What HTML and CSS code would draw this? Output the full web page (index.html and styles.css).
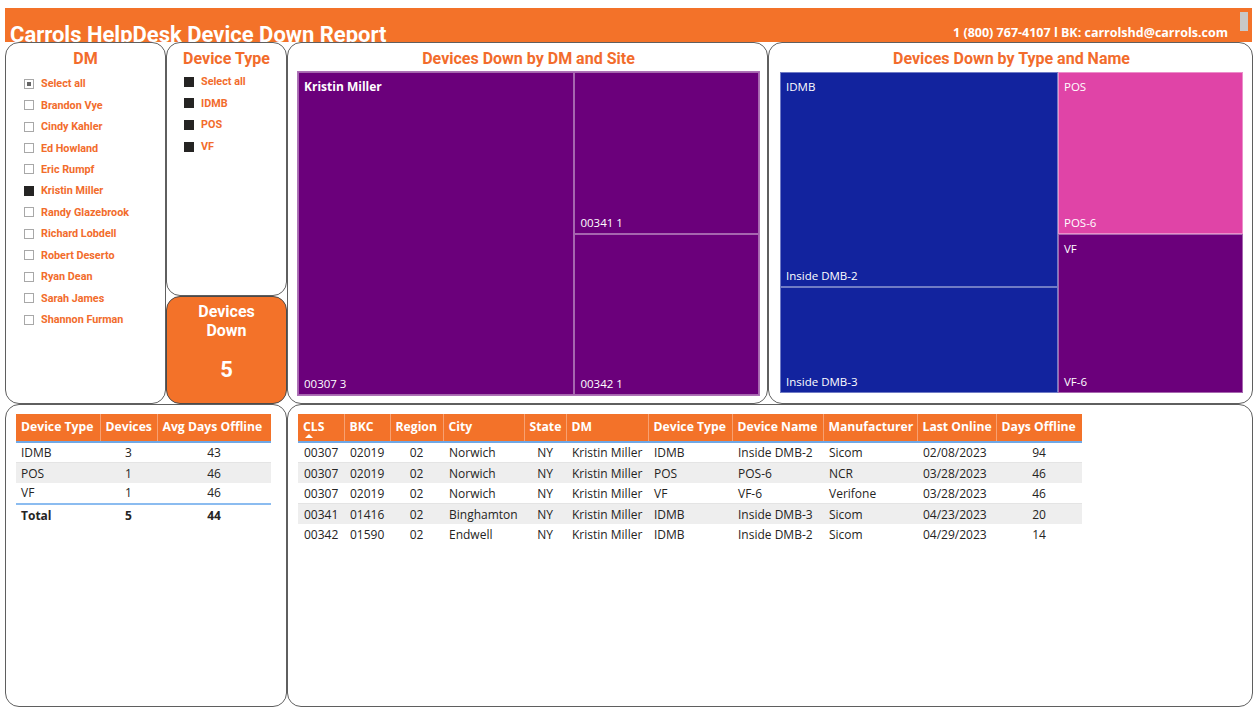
FILE: index.html
```html
<!DOCTYPE html>
<html>
<head>
<meta charset="utf-8">
<link rel="stylesheet" href="styles.css">
</head>
<body>
<div class="topbar">
  <div class="title">Carrols HelpDesk Device Down Report</div>
  <div class="contact">1 (800) 767-4107 l BK: carrolshd@carrols.com</div>
  <span class="thumb"></span>
</div>
<div class="board">
  <div class="panel dm">
    <div class="ptitle">DM</div>
    <ul class="slicer">
      <li><span class="cb partial"></span>Select all</li>
      <li><span class="cb"></span>Brandon Vye</li>
      <li><span class="cb"></span>Cindy Kahler</li>
      <li><span class="cb"></span>Ed Howland</li>
      <li><span class="cb"></span>Eric Rumpf</li>
      <li><span class="cb on"></span>Kristin Miller</li>
      <li><span class="cb"></span>Randy Glazebrook</li>
      <li><span class="cb"></span>Richard Lobdell</li>
      <li><span class="cb"></span>Robert Deserto</li>
      <li><span class="cb"></span>Ryan Dean</li>
      <li><span class="cb"></span>Sarah James</li>
      <li><span class="cb"></span>Shannon Furman</li>
    </ul>
  </div>
  <div class="midcol">
    <div class="panel dtype">
      <div class="ptitle">Device Type</div>
      <ul class="slicer tight">
        <li><span class="cb on"></span>Select all</li>
        <li><span class="cb on"></span>IDMB</li>
        <li><span class="cb on"></span>POS</li>
        <li><span class="cb on"></span>VF</li>
      </ul>
    </div>
    <div class="card">
      <div class="card-label">Devices<br>Down</div>
      <div class="card-value">5</div>
    </div>
  </div>
  <div class="panel tm1">
    <div class="ptitle">Devices Down by DM and Site</div>
    <div class="treemap purple">
      <div class="cell c307">
        <span class="glabel">Kristin Miller</span>
        <span class="ilabel">00307 3</span>
      </div>
      <div class="tcol w185">
        <div class="cell h162"><span></span><span class="ilabel">00341 1</span></div>
        <div class="cell grow"><span></span><span class="ilabel">00342 1</span></div>
      </div>
    </div>
  </div>
  <div class="panel tm2">
    <div class="ptitle">Devices Down by Type and Name</div>
    <div class="treemap">
      <div class="tcol w278 blue">
        <div class="cell h215"><span class="tlabel">IDMB</span><span class="ilabel">Inside DMB-2</span></div>
        <div class="cell grow"><span></span><span class="ilabel">Inside DMB-3</span></div>
      </div>
      <div class="tcol grow">
        <div class="cell h162 pink"><span class="tlabel">POS</span><span class="ilabel">POS-6</span></div>
        <div class="cell grow purple"><span class="tlabel">VF</span><span class="ilabel">VF-6</span></div>
      </div>
    </div>
  </div>
  <div class="panel bl">
    <table class="grid summary">
      <colgroup><col style="width:84px"><col style="width:57px"><col style="width:114px"></colgroup>
      <thead>
        <tr><th>Device Type</th><th>Devices</th><th>Avg Days Offline</th></tr>
      </thead>
      <tbody>
        <tr><td>IDMB</td><td class="c">3</td><td class="c">43</td></tr>
        <tr class="alt"><td>POS</td><td class="c">1</td><td class="c">46</td></tr>
        <tr><td>VF</td><td class="c">1</td><td class="c">46</td></tr>
      </tbody>
      <tfoot>
        <tr><td>Total</td><td class="c">5</td><td class="c">44</td></tr>
      </tfoot>
    </table>
  </div>
  <div class="panel br">
    <table class="grid detail">
      <colgroup>
        <col style="width:46px"><col style="width:46px"><col style="width:53px"><col style="width:81px">
        <col style="width:42px"><col style="width:82px"><col style="width:84px"><col style="width:91px">
        <col style="width:94px"><col style="width:79px"><col style="width:86px">
      </colgroup>
      <thead>
        <tr>
          <th class="sorted">CLS<span class="sort"></span></th><th>BKC</th><th>Region</th><th>City</th><th>State</th><th>DM</th>
          <th>Device Type</th><th>Device Name</th><th>Manufacturer</th><th>Last Online</th><th>Days Offline</th>
        </tr>
      </thead>
      <tbody>
        <tr><td>00307</td><td>02019</td><td class="c">02</td><td>Norwich</td><td class="c">NY</td><td>Kristin Miller</td><td>IDMB</td><td>Inside DMB-2</td><td>Sicom</td><td>02/08/2023</td><td class="c">94</td></tr>
        <tr class="alt"><td>00307</td><td>02019</td><td class="c">02</td><td>Norwich</td><td class="c">NY</td><td>Kristin Miller</td><td>POS</td><td>POS-6</td><td>NCR</td><td>03/28/2023</td><td class="c">46</td></tr>
        <tr><td>00307</td><td>02019</td><td class="c">02</td><td>Norwich</td><td class="c">NY</td><td>Kristin Miller</td><td>VF</td><td>VF-6</td><td>Verifone</td><td>03/28/2023</td><td class="c">46</td></tr>
        <tr class="alt"><td>00341</td><td>01416</td><td class="c">02</td><td>Binghamton</td><td class="c">NY</td><td>Kristin Miller</td><td>IDMB</td><td>Inside DMB-3</td><td>Sicom</td><td>04/23/2023</td><td class="c">20</td></tr>
        <tr><td>00342</td><td>01590</td><td class="c">02</td><td>Endwell</td><td class="c">NY</td><td>Kristin Miller</td><td>IDMB</td><td>Inside DMB-2</td><td>Sicom</td><td>04/29/2023</td><td class="c">14</td></tr>
      </tbody>
    </table>
  </div>
</div>
</body>
</html>
```

FILE: styles.css
```css
* { box-sizing: border-box; }
html, body { margin: 0; padding: 0; background: #fff; }
body { width: 1257px; height: 711px; overflow: hidden; font-family: "Open Sans", "Liberation Sans", sans-serif; color: #252423; }

.topbar {
  position: relative;
  margin: 8px 5px 0 5px;
  height: 34px;
  background: #F37229;
  display: flex;
  justify-content: space-between;
  overflow: hidden;
  color: #fff;
}
.title {
  font-family: Roboto, "Liberation Sans", sans-serif;
  font-weight: 700;
  font-size: 22px;
  line-height: 22px;
  padding: 16px 0 0 5px;
  white-space: nowrap;
}
.contact {
  font-family: "Open Sans", "Liberation Sans", sans-serif;
  font-weight: 700;
  font-size: 12.5px;
  line-height: 16px;
  padding: 17px 24px 0 0;
  white-space: nowrap;
}
.thumb {
  position: absolute;
  right: 4px;
  top: 4px;
  width: 8px;
  height: 19px;
  background: #c8c8c8;
}

.board {
  margin-left: 5px;
  display: grid;
  grid-template-columns: 161px 121px 481px 485px;
  grid-template-rows: 362px 303px;
}
.panel {
  border: 1px solid #5f5f5f;
  border-radius: 14px;
  background: #fff;
  overflow: hidden;
}
.ptitle {
  font-family: Roboto, "Liberation Sans", sans-serif;
  font-weight: 700;
  font-size: 16px;
  line-height: 20px;
  color: #F26C2C;
  text-align: center;
  padding-top: 6px;
  height: 28px;
}

.dm { grid-column: 1; grid-row: 1; }
.midcol { grid-column: 2; grid-row: 1; display: flex; flex-direction: column; }
.dtype { height: 254px; }
.tm1 { grid-column: 3; grid-row: 1; padding: 0 7px 0 9px; }
.tm2 { grid-column: 4; grid-row: 1; padding: 0 8px 0 10px; }
.bl { grid-column: 1 / span 2; grid-row: 2; padding: 9px 10px 0 10px; }
.br { grid-column: 3 / span 2; grid-row: 2; padding: 9px 10px 0 10px; }

.slicer {
  list-style: none;
  margin: 0;
  padding: 2px 0 0 18px;
}
.slicer li {
  display: flex;
  align-items: center;
  height: 21.45px;
  font-family: Roboto, "Liberation Sans", sans-serif;
  font-weight: 700;
  font-size: 10.8px;
  color: #F26C2C;
}
.dtype .slicer { padding: 0 0 0 17px; }
.dtype .slicer li { height: 21.6px; }
.cb {
  width: 10px;
  height: 10px;
  border: 1px solid #a8a8a8;
  background: #fff;
  margin-right: 7px;
  flex: none;
  position: relative;
}
.cb.partial::after {
  content: "";
  position: absolute;
  left: 2px; top: 2px;
  width: 4px; height: 4px;
  background: #666;
}
.cb.on { background: #252423; border-color: #252423; }

.card {
  height: 108px;
  background: #F37229;
  border: 1px solid #4a4a4a;
  border-radius: 14px;
  color: #fff;
  text-align: center;
  font-family: Roboto, "Liberation Sans", sans-serif;
  font-weight: 700;
}
.card-label { font-size: 16px; line-height: 19px; padding-top: 5px; }
.card-value { font-size: 22px; line-height: 26px; padding-top: 17px; }

.treemap {
  display: flex;
  height: 325px;
  border: 1px solid rgba(255,255,255,0.45);
}
.tm2 .treemap { height: 323px; }
.tcol { display: flex; flex-direction: column; }
.w185 { width: 185px; }
.w278 { width: 278px; }
.grow { flex: 1; }
.cell {
  display: flex;
  flex-direction: column;
  justify-content: space-between;
  padding: 4px 5px 2px 5px;
  color: #fff;
  font-family: "Open Sans", "Liberation Sans", sans-serif;
  font-size: 11.5px;
  line-height: 16px;
  border: 0.5px solid rgba(255,255,255,0.4);
}
.c307 { width: 277px; }
.h162 { height: 162px; }
.h215 { height: 215px; }
.purple { background: #6B007B; }
.blue { background: #12239E; }
.pink { background: #E044A7; }
.glabel { font-weight: 700; font-size: 12px; padding-top: 2px; }
.tlabel { padding-top: 2px; }

.grid {
  border-collapse: collapse;
  table-layout: fixed;
  font-family: "Open Sans", "Liberation Sans", sans-serif;
  font-size: 12px;
  color: #252423;
}
.summary { width: 255px; }
.detail { width: 784px; }
.grid th {
  background: #F37229;
  color: #fff;
  font-weight: 700;
  font-size: 12.2px;
  text-align: left;
  height: 28px;
  padding: 0 2px 2px 5px;
  white-space: nowrap;
  overflow: hidden;
  border-left: 1px solid #f7a172;
  border-bottom: 2px solid #6fa8e6;
  vertical-align: middle;
}
.grid th:first-child { border-left: none; }
.grid td {
  height: 20.5px;
  padding: 0 6px;
  white-space: nowrap;
  overflow: hidden;
  vertical-align: middle;
}
.grid tr.alt td { background: #eeeeee; border-top: 1px solid #e4e4e4; }
.grid td.c { text-align: center; }
.summary td:first-child { padding-left: 5px; }
.summary tfoot td {
  font-weight: 700;
  border-top: 2px solid #8bbcf0;
  height: 22px;
}
.detail td { padding-left: 6px; }
.sorted { position: relative; }
.sort {
  position: absolute;
  left: 7px;
  bottom: 3px;
  width: 0; height: 0;
  border-left: 4px solid transparent;
  border-right: 4px solid transparent;
  border-bottom: 4px solid #fff;
}
```
